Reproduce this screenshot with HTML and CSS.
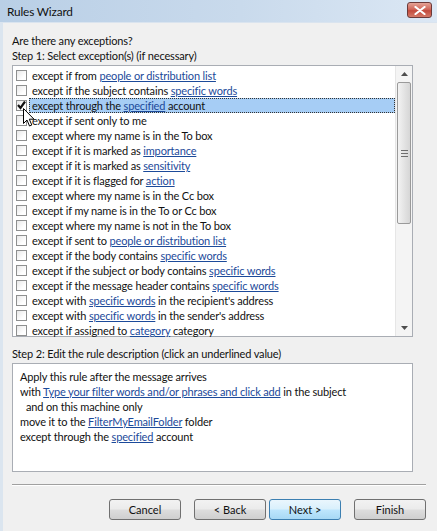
FILE: index.html
```html
<!DOCTYPE html>
<html lang="en">
<head>
    <meta charset="UTF-8">
    <title>Rules Wizard</title>
    <link rel="stylesheet" href="styles.css">
</head>
<body>
    <div class="window">
        <div class="titlebar">
            <span class="title">Rules Wizard</span>
            <button class="close-btn" aria-label="Close">
                <svg width="12" height="9" viewBox="0 0 12 9"><path d="M1.5 1 L10.5 8 M10.5 1 L1.5 8" stroke="#fff" stroke-width="2.2" stroke-linecap="round"/></svg>
            </button>
        </div>

        <div class="content">
            <p class="label">Are there any exceptions?</p>
            <p class="label">Step 1: Select exception(s) (if necessary)</p>

            <div class="listbox">
                <ul class="rules" id="rules"></ul>
                <div class="scrollbar">
                    <div class="sb-arrow">
                        <svg width="7" height="4" viewBox="0 0 7 4"><path d="M0 4 L3.5 0 L7 4Z" fill="#4d4d4d"/></svg>
                    </div>
                    <div class="sb-track">
                        <div class="sb-thumb">
                            <span class="grip"></span>
                        </div>
                    </div>
                    <div class="sb-arrow">
                        <svg width="7" height="4" viewBox="0 0 7 4"><path d="M0 0 L3.5 4 L7 0Z" fill="#4d4d4d"/></svg>
                    </div>
                </div>
                <!-- mouse pointer over the checked row -->
                <svg class="cursor" width="12" height="19" viewBox="0 0 12 19">
                    <path d="M0.5 0.5 L0.5 15.5 L4 12 L6.5 18 L8.8 17 L6.3 11.2 L11 11.2 Z" fill="#fff" stroke="#000" stroke-width="1"/>
                </svg>
            </div>

            <p class="label step2">Step 2: Edit the rule description (click an underlined value)</p>
            <div class="description">
                <div>Apply this rule after the message arrives</div>
                <div>with <a href="#">Type your filter words and/or phrases and click add</a> in the subject</div>
                <div class="indent">and on this machine only</div>
                <div>move it to the <a href="#">FilterMyEmailFolder</a> folder</div>
                <div>except through the <a href="#">specified</a> account</div>
            </div>

            <div class="separator"></div>

            <div class="buttons">
                <button class="btn">Cancel</button>
                <button class="btn">&lt; Back</button>
                <button class="btn default">Next &gt;</button>
                <button class="btn">Finish</button>
            </div>
        </div>
    </div>

    <script>
        // each rule: text parts, links wrapped in [ ]
        const rules = [
            'except if from [people or distribution list]',
            'except if the subject contains [specific words]',
            'except through the [specified] account',
            'except if sent only to me',
            'except where my name is in the To box',
            'except if it is marked as [importance]',
            'except if it is marked as [sensitivity]',
            'except if it is flagged for [action]',
            'except where my name is in the Cc box',
            'except if my name is in the To or Cc box',
            'except where my name is not in the To box',
            'except if sent to [people or distribution list]',
            'except if the body contains [specific words]',
            'except if the subject or body contains [specific words]',
            'except if the message header contains [specific words]',
            'except with [specific words] in the recipient\'s address',
            'except with [specific words] in the sender\'s address',
            'except if assigned to [category] category'
        ];

        const list = document.getElementById('rules');
        rules.forEach((rule, i) => {
            const li = document.createElement('li');
            li.className = 'rule';
            const checked = i === 2;
            const html = rule.replace(/\[(.+?)\]/g, '<a href="#">$1</a>');
            li.innerHTML = `<span class="checkbox">${checked ? '<svg width="9" height="9" viewBox="0 0 9 9"><path d="M1 4 L3.5 7 L8 0.5" stroke="#111" stroke-width="2.2" fill="none"/></svg>' : ''}</span><span class="rule-text${checked ? ' selected' : ''}">${html}</span>`;
            list.appendChild(li);
        });
    </script>
</body>
</html>
```

FILE: styles.css
```css
*,
*::before,
*::after {
    box-sizing: border-box;
}

:root {
    --font: "Lato", "DejaVu Sans", sans-serif;
    --fs: 11px;
    --link: #1c4a9a;
    --text: #111111;
    --border: #a9adb4;
}

body {
    margin: 0;
    background: #f0f0f0;
    font-family: var(--font);
    font-size: var(--fs);
    letter-spacing: -0.15px;
    color: var(--text);
}

p {
    margin: 0;
}

a {
    color: var(--link);
    text-decoration: underline;
}

.window {
    width: 437px;
    height: 531px;
    border-left: 3px solid #dbe5ef;
    display: flex;
    flex-direction: column;
}

.titlebar {
    height: 23px;
    margin-left: -3px;
    display: flex;
    align-items: center;
    justify-content: space-between;
    padding: 0 5px 0 7px;
    background: linear-gradient(90deg, #b9cfe6 0%, #c9daec 55%, #dbe7f4 100%);
    border-bottom: 1px solid #dae4ef;
}

.title {
    font-size: 11.8px;
    color: #111;
}

.close-btn {
    width: 25px;
    height: 16px;
    margin-top: -2px;
    padding: 0;
    display: flex;
    align-items: center;
    justify-content: center;
    border: 1px solid #6b3a3a;
    border-radius: 3px;
    background: linear-gradient(180deg, #e4a396 0%, #d0675a 45%, #c34a3c 55%, #d47a68 100%);
}

.content {
    flex: 1;
    padding: 10px 0 0 9px;
    display: flex;
    flex-direction: column;
}

.label {
    height: 15px;
    line-height: 15px;
    margin-bottom: 0;
}

.listbox {
    position: relative;
    margin-top: 2px;
    width: 401px;
    height: 272px;
    background: #fff;
    border: 1px solid var(--border);
    display: flex;
}

.rules {
    list-style: none;
    margin: 0;
    padding: 2px 0 0 3px;
    flex: 1;
}

.rule {
    height: 15px;
    display: flex;
    align-items: center;
    white-space: nowrap;
}

.checkbox {
    width: 11px;
    height: 11px;
    border: 1px solid #8e8f8f;
    background: linear-gradient(135deg, #e8e8e8 0%, #ffffff 70%);
    margin-right: 3px;
    flex-shrink: 0;
    display: flex;
    align-items: center;
    justify-content: center;
}

.rule-text {
    height: 15px;
    line-height: 14px;
    padding: 0 1px;
    border: 1px dotted transparent;
}

.rule-text.selected {
    flex: 1;
    margin-left: -1px;
    padding-left: 2px;
    background: #a6cdf5;
    border-color: #333;
}

.scrollbar {
    width: 17px;
    display: flex;
    flex-direction: column;
    background: #f4f4f4;
    border-left: 1px solid #e6e6e6;
}

.sb-arrow {
    height: 16px;
    display: flex;
    align-items: center;
    justify-content: center;
}

.sb-track {
    flex: 1;
}

.sb-thumb {
    height: 142px;
    margin: 0 1px;
    border: 1px solid #9a9a9a;
    border-radius: 2px;
    background: linear-gradient(90deg, #f3f3f3 0%, #e4e4e4 50%, #d6d6d6 100%);
    display: flex;
    align-items: center;
    justify-content: center;
}

.grip {
    width: 7px;
    height: 7px;
    background: repeating-linear-gradient(180deg, #6e6e6e 0 1px, transparent 1px 3px);
}

.cursor {
    position: absolute;
    left: 10px;
    top: 42px;
}

.step2 {
    margin-top: 9px;
}

.description {
    margin-top: 2px;
    width: 401px;
    height: 109px;
    background: #fff;
    border: 1px solid var(--border);
    padding: 5px 0 0 7px;
    line-height: 15px;
}

.description .indent {
    padding-left: 6px;
}

.separator {
    margin: 12px 0 0 0;
    width: 414px;
    border-top: 1px solid #a0a0a0;
    border-bottom: 1px solid #fff;
}

.buttons {
    display: flex;
    justify-content: flex-end;
    gap: 13px;
    margin-top: 13px;
    width: 414px;
}

.btn {
    width: 72px;
    height: 21px;
    padding: 0;
    font-family: var(--font);
    font-size: var(--fs);
    color: var(--text);
    border: 1px solid #707070;
    border-radius: 3px;
    background: linear-gradient(180deg, #f2f2f2 0%, #ebebeb 48%, #dddddd 52%, #cfcfcf 100%);
}

.btn.default {
    margin-left: -10px;
    border-color: #3c7fb1;
    background: linear-gradient(180deg, #eaf6fd 0%, #d9f0fc 48%, #bee6fd 52%, #a7d9f5 100%);
}
```
